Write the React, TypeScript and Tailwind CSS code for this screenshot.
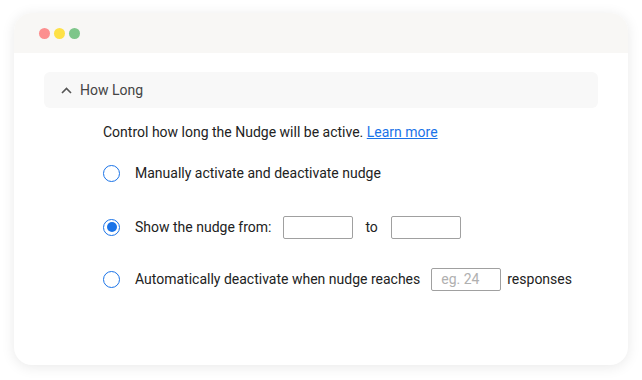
const font = { fontFamily: 'Roboto, "Liberation Sans", sans-serif' };

function Radio({ checked }: { checked?: boolean }) {
  return (
    <span className="flex h-[17px] w-[17px] shrink-0 items-center justify-center rounded-full border-[1.5px] border-[#1a73e8]">
      {checked && <span className="h-[10px] w-[10px] rounded-full bg-[#1a73e8]" />}
    </span>
  );
}

function Box({ placeholder }: { placeholder?: string }) {
  return (
    <input
      className="h-[23px] w-[70px] rounded-[2px] border border-[#a0a0a0] px-[9px] text-[14px] text-[#222] outline-none placeholder:text-[#b0b0b0]"
      placeholder={placeholder}
      style={font}
    />
  );
}

export default function App() {
  return (
    <div className="h-[380px] w-[642px] bg-white pl-[14px] pt-[13px]" style={font}>
      <div className="h-[352px] w-[614px] overflow-hidden rounded-[18px] bg-white shadow-[0_2px_14px_rgba(0,0,0,0.09)]">
        {/* title bar */}
        <div className="flex h-[40px] items-center gap-[4px] bg-[#f8f7f5] pl-[25px]">
          <span className="h-[11px] w-[11px] rounded-full bg-[#fc8f8f]" />
          <span className="h-[11px] w-[11px] rounded-full bg-[#fee146]" />
          <span className="h-[11px] w-[11px] rounded-full bg-[#7ec68a]" />
        </div>

        <div className="px-[30px] pt-[19px]">
          <div className="flex h-[36px] items-center rounded-[6px] bg-[#f8f8f8] pl-[17px] text-[14px] text-[#444]">
            <svg width="11" height="7" viewBox="0 0 11 7" fill="none" className="mr-[8px]">
              <path d="M1 6l4.5-4.5L10 6" stroke="#555" strokeWidth="1.6" />
            </svg>
            How Long
          </div>

          <div className="pl-[59px] text-[14px] text-[#222]">
            <p className="mt-[15px] leading-[18px]">
              Control how long the Nudge will be active.{' '}
              <a className="text-[#1a73e8] underline">Learn more</a>
            </p>

            <div className="mt-[23px] flex h-[18px] items-center gap-[15px]">
              <Radio />
              <span>Manually activate and deactivate nudge</span>
            </div>

            <div className="mt-[36px] flex h-[18px] items-center">
              <Radio checked />
              <span className="ml-[15px]">Show the nudge from:</span>
              <span className="ml-[12px]"><Box /></span>
              <span className="ml-[12px]">to</span>
              <span className="ml-[13px]"><Box /></span>
            </div>

            <div className="mt-[34px] flex h-[18px] items-center">
              <Radio />
              <span className="ml-[15px]">Automatically deactivate when nudge reaches</span>
              <span className="ml-[11px]"><Box placeholder="eg. 24" /></span>
              <span className="ml-[6px]">responses</span>
            </div>
          </div>
        </div>
      </div>
    </div>
  );
}
